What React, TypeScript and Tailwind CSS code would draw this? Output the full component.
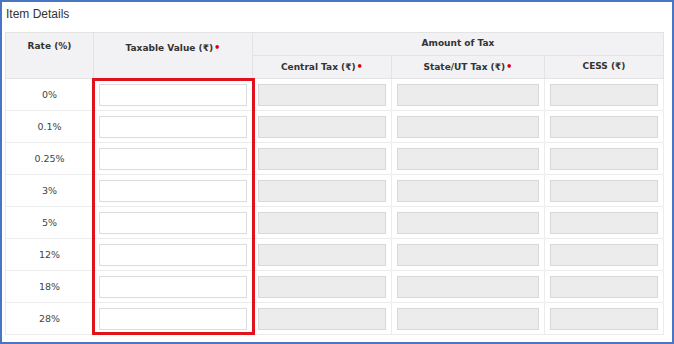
import React from 'react';

const rates = ['0%', '0.1%', '0.25%', '3%', '5%', '12%', '18%', '28%'];

function Req() {
  return <span className="text-[#e00000] ml-[1px] text-[10px]">•</span>;
}

export default function App() {
  return (
    <div className="w-[674px] h-[344px] bg-white border-[2px] border-[#4a74c4] overflow-hidden font-['DejaVu_Sans',sans-serif] text-[#333]">
      <div className="pl-[4px] pt-[3px] h-[30px] text-[12px] text-[#333] font-['Liberation_Sans',Arial,sans-serif]">Item Details</div>
      <div className="relative ml-[3px] w-[658px]">
        <table className="border-collapse table-fixed w-[658px] text-[9px]">
          <colgroup>
            <col className="w-[88px]" />
            <col className="w-[159px]" />
            <col className="w-[139px]" />
            <col className="w-[153px]" />
            <col className="w-[119px]" />
          </colgroup>
          <thead>
            <tr className="h-[23px] bg-[#f2f2f4]">
              <th rowSpan={2} className="border border-[#e3e3e3] align-top pt-[7px] font-bold">Rate (%)</th>
              <th rowSpan={2} className="border border-[#e3e3e3] align-top pt-[7px] font-bold">Taxable Value (₹)<Req /></th>
              <th colSpan={3} className="border border-[#e3e3e3] font-bold">Amount of Tax</th>
            </tr>
            <tr className="h-[23px] bg-[#f2f2f4]">
              <th className="border border-[#e3e3e3] font-bold">Central Tax (₹)<Req /></th>
              <th className="border border-[#e3e3e3] font-bold">State/UT Tax (₹)<Req /></th>
              <th className="border border-[#e3e3e3] font-bold">CESS (₹)</th>
            </tr>
          </thead>
          <tbody>
            {rates.map(r => (
              <tr key={r} className="h-[32px]">
                <td className="border border-[#ececec] text-center text-[9.5px] text-[#444] pt-[2px]">{r}</td>
                <td className="border border-[#ececec] px-[5px]">
                  <div className="h-[22px] border border-[#dcdcdc] bg-white" />
                </td>
                <td className="border border-[#ececec] px-[5px]">
                  <div className="h-[22px] border border-[#d8d8d8] bg-[#ececec]" />
                </td>
                <td className="border border-[#ececec] px-[5px]">
                  <div className="h-[22px] border border-[#d8d8d8] bg-[#ececec]" />
                </td>
                <td className="border border-[#ececec] px-[5px]">
                  <div className="h-[22px] border border-[#d8d8d8] bg-[#ececec]" />
                </td>
              </tr>
            ))}
          </tbody>
        </table>
        <div className="absolute left-[87px] top-[46px] w-[163px] h-[257px] border-[3px] border-[#e2121c] pointer-events-none" />
      </div>
    </div>
  );
}
